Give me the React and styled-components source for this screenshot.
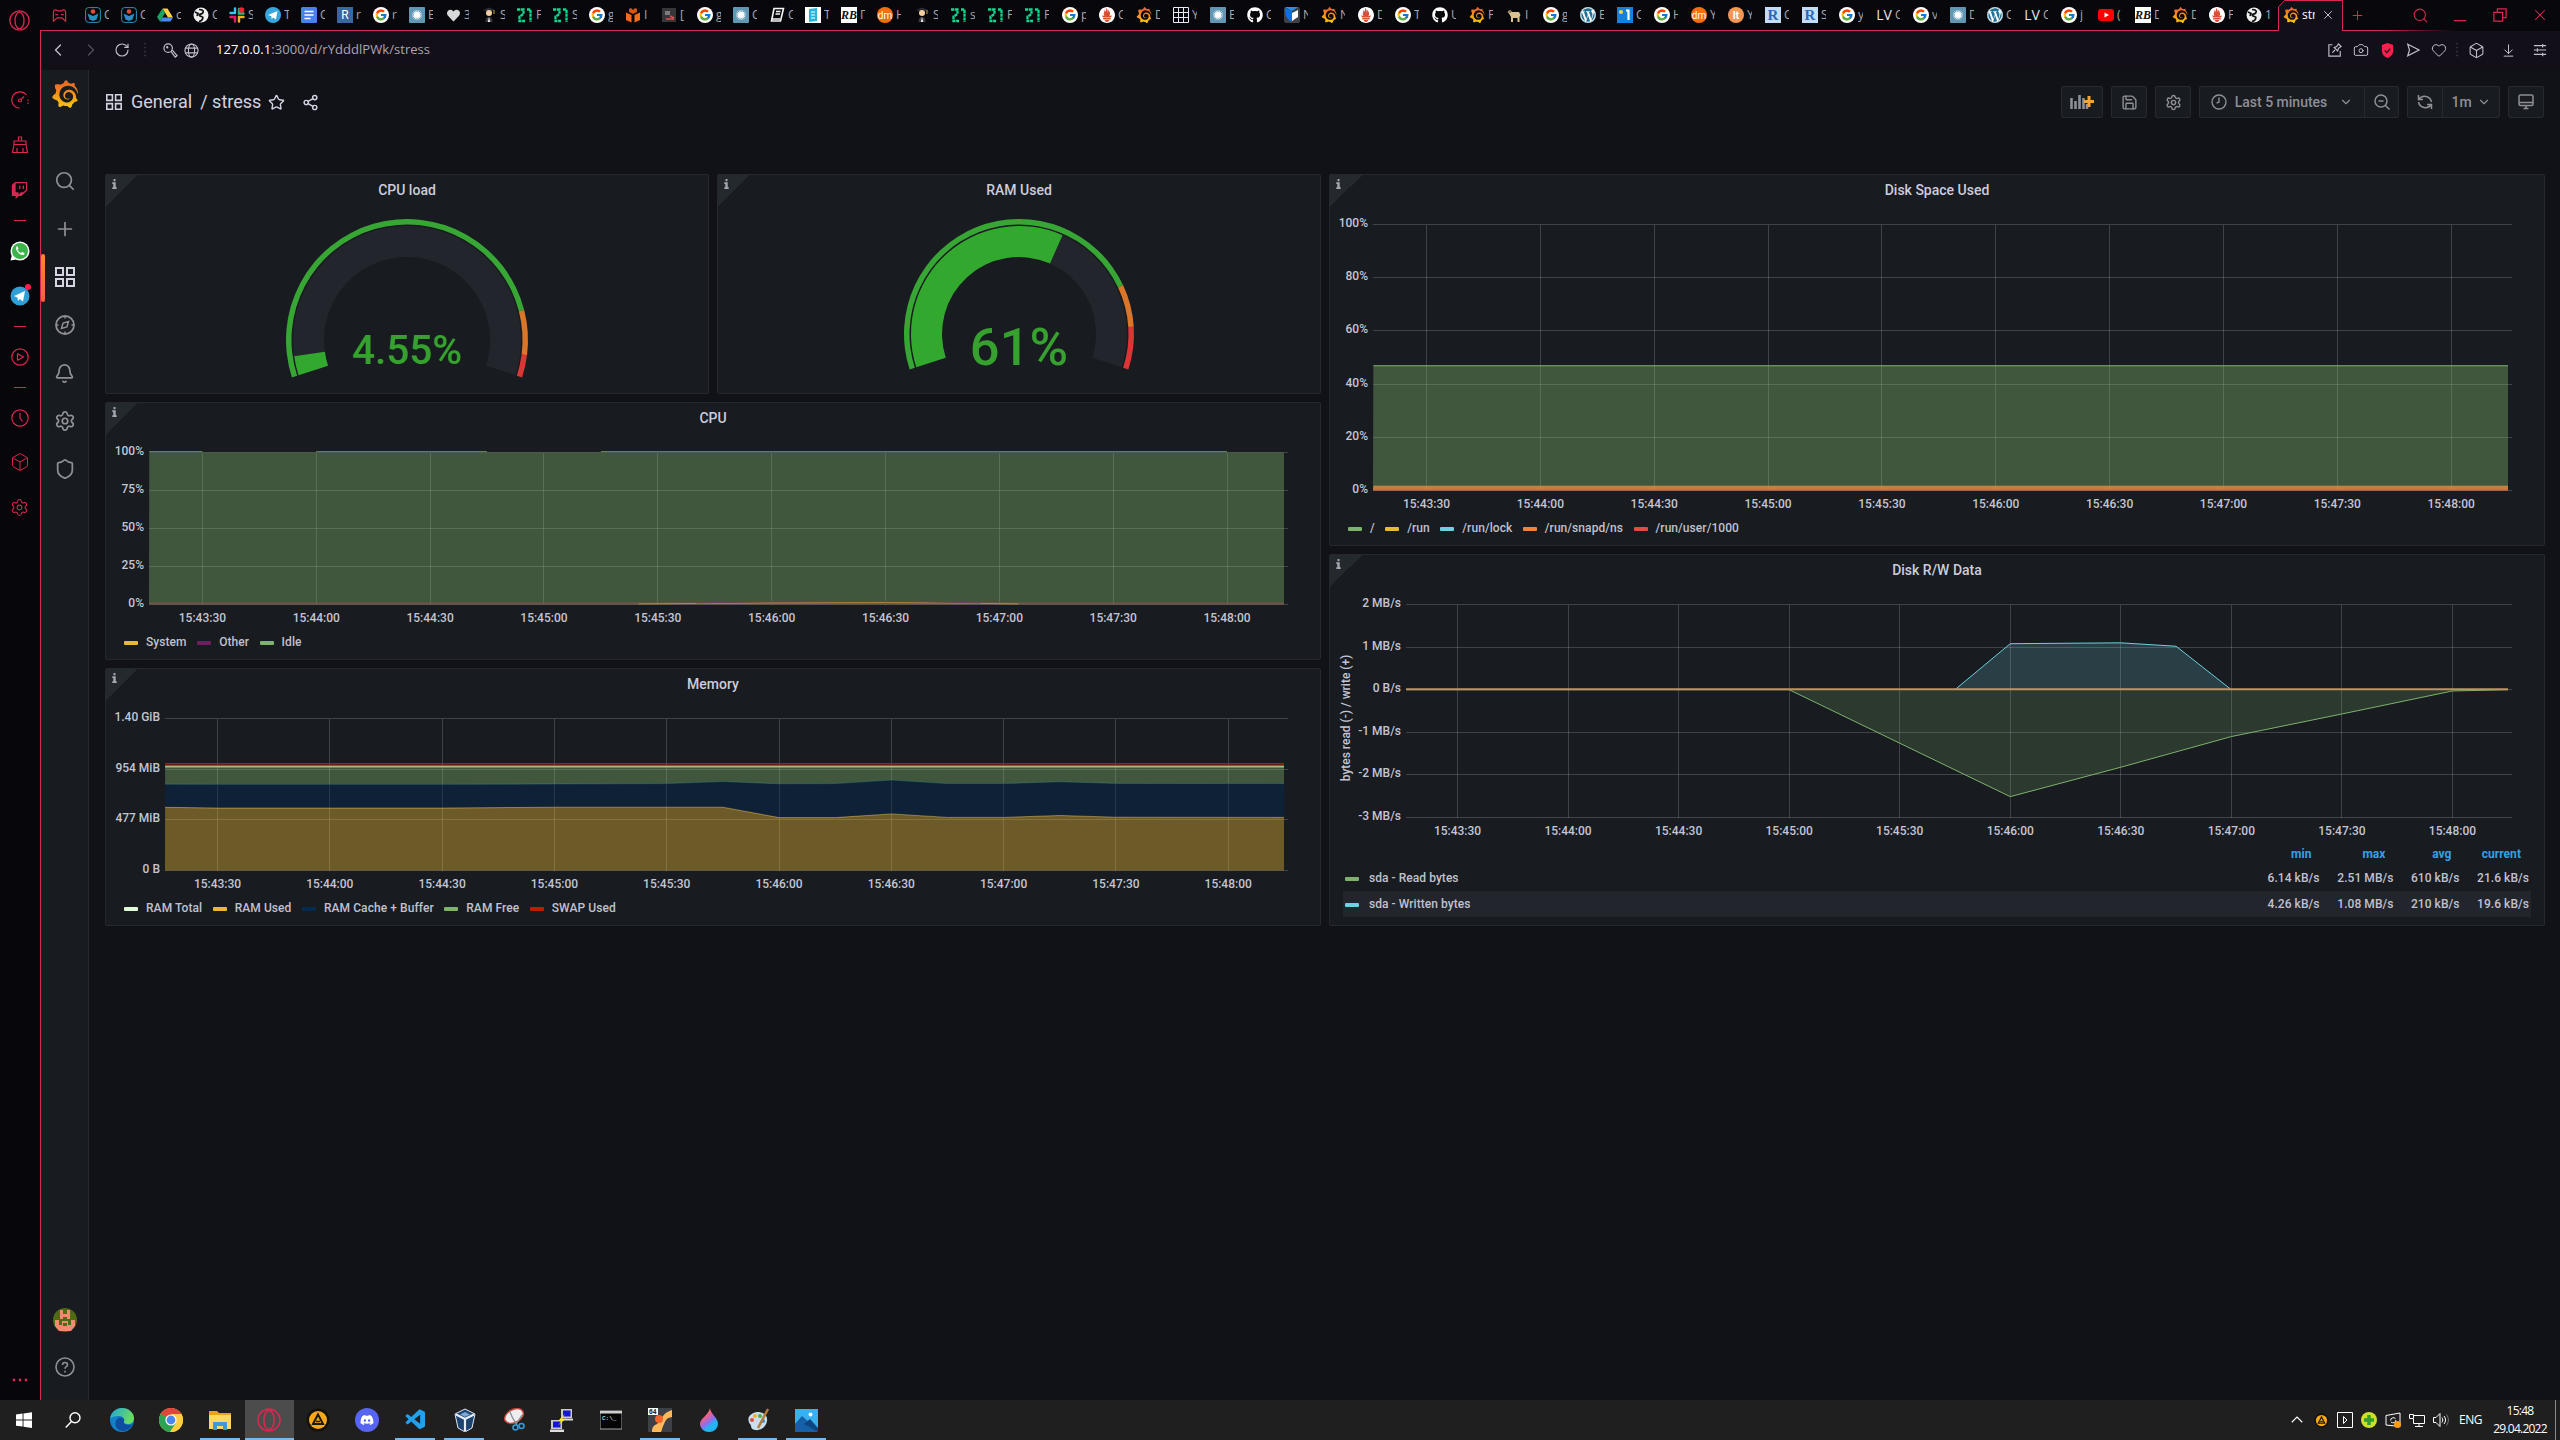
import React from "react";
import styled, { createGlobalStyle, css } from "styled-components";
import {
  ArrowDownToLine, Bell, Box, Camera, ChevronDown, ChevronLeft, ChevronRight,
  Heart, Plus, RotateCw, Save, Search, Settings, Share2, Shield, Star, X,
} from "lucide-react";
import { SiGrafana, SiPrometheus } from "react-icons/si";
import { FaGithub, FaWordpress, FaDiscord, FaHeart, FaTwitch } from "react-icons/fa";
import { FcGoogle } from "react-icons/fc";
import { VscVscode } from "react-icons/vsc";

const RED = "#d9284f";
const UI = `"Segoe UI", "Open Sans", "Noto Sans", sans-serif`;
const ROBOTO = `Roboto, "Liberation Sans", sans-serif`;

const Global = createGlobalStyle`
  * { box-sizing: border-box; }
  html, body { margin: 0; padding: 0; background: #111217; }
  body { font-family: ${ROBOTO}; color: #ccccdc; overflow: hidden; }
  svg { display: block; flex: none; }
`;

const Screen = styled.div`
  width: 2560px;
  height: 1440px;
  display: flex;
  flex-direction: column;
  overflow: hidden;
`;

const Browser = styled.div`
  display: flex;
  height: 1400px;
  background: #08070c;
`;

/* ---------- left browser rail ---------- */

const Rail = styled.aside`
  width: 40px;
  display: flex;
  flex-direction: column;
  align-items: center;
  color: ${RED};
  background: #07060b;
`;

const RailItem = styled.div`
  position: relative;
  width: 39px;
  margin-right: 1px;
  height: ${(p) => p.$h}px;
  display: flex;
  align-items: center;
  justify-content: center;
`;

const RailDash = styled.div`
  width: 12px;
  height: 1px;
  background: ${RED};
`;

const RailGap = styled.div`
  flex: 1;
`;

const Badge = styled.i`
  position: absolute;
  top: 11px;
  left: 25px;
  width: 6px;
  height: 6px;
  border-radius: 50%;
  background: #ff1f4f;
`;

const Window = styled.div`
  flex: 1;
  min-width: 0;
  display: flex;
  flex-direction: column;
`;

const TabStrip = styled.div`
  height: 30px;
  display: flex;
  align-items: center;
  padding-left: 1px;
  background: #08080c;
  font: 12px/30px ${UI};
  color: #e6e3ea;
`;

const PinnedSlot = styled.div`
  width: 36px;
  height: 30px;
  display: flex;
  align-items: center;
  justify-content: center;
  color: ${RED};
`;

const Tab = styled.div`
  width: ${(p) => p.$w}px;
  height: 30px;
  padding-left: 8px;
  display: flex;
  align-items: center;
  gap: 3px;
  flex: none;
`;

const TabText = styled.span`
  width: ${(p) => p.$w || 5}px;
  overflow: hidden;
  white-space: nowrap;
  color: ${(p) => (p.$active ? "#fff" : "#a9a6ad")};
`;

const ActiveTab = styled.div`
  position: relative;
  width: 65px;
  height: 31px;
  margin: 1px 0 0 3px;
  padding: 0 6px 1px 5px;
  display: flex;
  align-items: center;
  gap: 3px;
  flex: none;
`;

const TabOutline = styled.svg`
  position: absolute;
  inset: 0;
`;

const Over = styled.div`
  position: relative;
  display: flex;
  align-items: center;
  margin-left: ${(p) => p.$ml || 0}px;
`;

const StripControls = styled.div`
  display: flex;
  margin-left: auto;
  color: ${RED};
`;

const StripButton = styled.div`
  width: ${(p) => p.$w || 40}px;
  height: 30px;
  display: flex;
  align-items: center;
  justify-content: center;
  color: ${RED};
`;

const Rule = styled.div`
  height: 1px;
  display: flex;
  background: linear-gradient(90deg, ${RED} 0, ${RED} 2340px, transparent 2415px);
`;

const RuleGap = styled.i`
  width: 62px;
  height: 1px;
  margin-left: 2239px;
  background: #120f19;
`;

const Body = styled.div`
  flex: 1;
  display: flex;
  flex-direction: column;
  border-left: 1px solid ${RED};
  min-height: 0;
`;

const AddressBar = styled.div`
  height: 39px;
  display: flex;
  align-items: center;
  padding-right: 5px;
  background: #120f19;
  color: #c3bfca;
`;

const BarSlot = styled.div`
  width: ${(p) => p.$w}px;
  height: 39px;
  padding-bottom: 1px;
  display: flex;
  align-items: center;
  justify-content: center;
  opacity: ${(p) => (p.$dim ? 0.35 : 1)};
`;

const Url = styled.div`
  margin-left: 15px;
  flex: 1;
  font: 13px/37px ${UI};
  height: 39px;
  letter-spacing: 0.05px;
  color: #aaa5b1;
  b { font-weight: 400; color: #fff; }
`;

/* ---------- grafana ---------- */

const Grafana = styled.div`
  flex: 1;
  display: flex;
  min-height: 0;
  background: #111217;
`;

const SideMenu = styled.nav`
  width: 48px;
  padding-bottom: 10px;
  border-right: 1px solid #26292e;
  background: #181b1f;
  display: flex;
  flex-direction: column;
  align-items: center;
  color: #8e8f98;
`;

const Brand = styled.div`
  height: 87px;
  padding-top: 10px;
`;

const SideItem = styled.div`
  position: relative;
  width: 47px;
  height: ${(p) => p.$h || 48}px;
  display: flex;
  align-items: center;
  justify-content: center;
  color: ${(p) => (p.$active ? "#d5d6e2" : "inherit")};
  ${(p) => p.$active && css`
    &::before {
      content: "";
      position: absolute;
      left: 0;
      top: 1px;
      width: 4px;
      height: 48px;
      border-radius: 2px;
      background: linear-gradient(#ff8833, #f55f3e);
    }
  `}
`;

const Main = styled.main`
  flex: 1;
  min-width: 0;
  padding: 16px 15px 0 16px;
`;

const NavBar = styled.header`
  height: 32px;
  display: flex;
  align-items: center;
  margin-bottom: 56px;
`;

const Crumb = styled.div`
  display: flex;
  align-items: center;
  font-size: 18px;
  line-height: 32px;
  color: #d2d2e0;
  white-space: pre;
`;

const CrumbText = styled.span`
  margin-left: ${(p) => p.$ml}px;
`;

const CrumbIcon = styled.span`
  margin-left: ${(p) => p.$ml}px;
`;

const Actions = styled.div`
  margin-left: auto;
  margin-right: 1px;
  display: flex;
  gap: 8px;
`;

const ToolGroup = styled.div`
  display: flex;
  height: 32px;
  border: 1px solid #26292e;
  border-radius: 2px;
  background: #181b1f;
  color: #8e8f98;
`;

const Tool = styled.div`
  width: ${(p) => p.$w}px;
  display: flex;
  align-items: center;
  justify-content: center;
  gap: ${(p) => p.$gap || 0}px;
  font-size: 14px;
  font-weight: 500;
  & + & { border-left: 1px solid #26292e; }
`;

const Board = styled.div`
  display: grid;
  grid-template-columns: 1216px 1216px;
  gap: 8px;
`;

const Column = styled.div`
  display: flex;
  flex-direction: column;
  gap: 8px;
`;

const Pair = styled.div`
  display: grid;
  grid-template-columns: 1fr 1fr;
  gap: 8px;
`;

const PanelBox = styled.section`
  position: relative;
  height: ${(p) => p.$h}px;
  border: 1px solid #25282d;
  border-radius: 2px;
  background: #181b1f;
  overflow: hidden;
`;

const PanelTitle = styled.h2`
  margin: 0;
  height: 31px;
  font-size: 14px;
  font-weight: 500;
  line-height: 31px;
  text-align: center;
  color: #ccccdc;
`;

const Corner = styled.div`
  position: absolute;
  left: 0;
  top: 0;
  width: 32px;
  height: 32px;
  padding: 4px 0 0 6px;
  background: linear-gradient(135deg, #24292e 50%, transparent 50%);
`;

const ChartText = styled.text`
  font-family: ${ROBOTO};
  font-size: 12px;
  font-weight: 500;
  fill: #c4c5d4;
  dominant-baseline: central;
`;

const GaugeValue = styled.text`
  font-family: ${ROBOTO};
  font-weight: 500;
  fill: #37a12f;
  text-anchor: middle;
`;

const Legend = styled.div`
  height: 24px;
  display: flex;
  align-items: center;
  padding-left: 18px;
  font-size: 12px;
  font-weight: 500;
  letter-spacing: 0.07px;
  color: #c0c1d0;
`;

const LegendItem = styled.span`
  display: flex;
  align-items: center;
  margin-right: 10.5px;
`;

const Swatch = styled.i`
  width: 14px;
  height: 4px;
  margin-right: ${(p) => p.$mr || 8}px;
  margin-top: 2px;
  border-radius: 1px;
  background: ${(p) => p.$c};
`;

const StatTable = styled.div`
  margin: 0 13px;
  font-size: 12px;
  font-weight: 500;
  letter-spacing: 0.05px;
  color: #c0c1d0;
`;

const StatRow = styled.div`
  display: grid;
  grid-template-columns: 1fr 74px 74px 66px 69.5px;
  height: ${(p) => (p.$head ? 22 : 26)}px;
  line-height: ${(p) => (p.$head ? 22 : 26)}px;
  padding-right: 2px;
  background: ${(p) => (p.$shade ? "#22252b" : "transparent")};
  ${(p) => p.$head && css`
    color: #33a2e5;
    font-weight: 700;
    & > span { padding-right: 8px; }
  `}
`;

const StatCell = styled.span`
  text-align: right;
`;

const StatName = styled.span`
  display: flex;
  align-items: center;
  padding-left: 2px;
`;

/* ---------- taskbar ---------- */

const Taskbar = styled.footer`
  height: 40px;
  display: flex;
  align-items: stretch;
  background: #1f1f1f;
  color: #fff;
  font-family: ${UI};
`;

const TaskSlot = styled.div`
  position: relative;
  width: ${(p) => p.$w || 48.9}px;
  height: 40px;
  display: flex;
  align-items: center;
  justify-content: center;
  background: ${(p) => (p.$active ? "#4c4c4c" : "transparent")};
  ${(p) => p.$open && css`
    &::after {
      content: "";
      position: absolute;
      bottom: 0;
      left: ${p.$active ? 0 : 4}px;
      right: ${p.$active ? 0 : 5}px;
      height: 2px;
      background: #76b9ed;
    }
  `}
`;

const Tray = styled.div`
  margin-left: auto;
  display: flex;
  align-items: center;
`;

const TraySlot = styled.div`
  width: 24px;
  display: flex;
  align-items: center;
  justify-content: center;
`;

const TrayText = styled.div`
  width: ${(p) => p.$w}px;
  font-size: 12px;
  line-height: 18.5px;
  letter-spacing: ${(p) => p.$ls || -0.75}px;
  text-align: center;
`;

const ShowDesktop = styled.i`
  width: 5px;
  height: 40px;
  margin-left: 3px;
  border-left: 1px solid #8a8a8a;
`;

/* ---------- favicons ---------- */

const Ico = ({ s = 16, vb = 16, children, ...rest }) => (
  <svg width={s} height={s} viewBox={`0 0 ${vb} ${vb}`} fill="none" {...rest}>{children}</svg>
);

const Letter = ({ children, x = 8, y = 12, size = 11, fill = "#fff", weight = 700, family = ROBOTO, italic }) => (
  <text x={x} y={y} fontSize={size} fill={fill} fontWeight={weight} fontFamily={family}
    fontStyle={italic ? "italic" : "normal"} textAnchor="middle">{children}</text>
);

const GrafanaMark = ({ s = 16 }) => <SiGrafana size={s} style={{ fill: "url(#grafanaFill)" }} />;

const fav = {
  bot: () => <Ico><rect x=".6" y=".6" width="14.8" height="14.8" rx="3" stroke="#2a93bd" /><circle cx="8" cy="4.5" r="2.3" fill="#e04b3b" /><path d="M2.500 6.500 8 9l5.500-2.500-2 6L8 14l-3.500-1.500z" fill="#2590c4" /></Ico>,
  drive: () => <Ico><path d="M5.500 1.500h5L16 10.500h-5z" fill="#ffcf48" /><path d="M5.500 1.500 8 6 3 14.500 0 10z" fill="#1da462" /><path d="M3 14.500 5.500 10.500H16L13.500 14.500z" fill="#4688f4" /></Ico>,
  globe: () => <Ico><circle cx="8" cy="8" r="7.500" fill="#eee" /><path d="M6 2.500c3 0 5 1 4 3S5.500 7 6.500 8.500 11 9 9.500 12 6 14 6 14M2 5l3 1.500L4 9" stroke="#111" strokeWidth="1.700" /></Ico>,
  slack: () => <Ico strokeLinecap="round" strokeWidth="2.400"><path d="M6 1.500V6M1.500 6H4" stroke="#36c5f0" /><path d="M10 2v4.500h4.500" stroke="#2eb67d" /><path d="M10 14.500V10h4.500" stroke="#ecb22e" /><path d="M1.500 10H6v4.500" stroke="#e01e5a" /><circle cx="12.500" cy="3" r="2.800" fill="#ff1f2f" stroke="none" /></Ico>,
  telegram: () => <Ico><circle cx="8" cy="8" r="8" fill="#36a6dd" /><path d="m3 8 9.500-4-1.600 8.500-2.700-2-1.500 1.500-.4-2.700z" fill="#fff" /></Ico>,
  docs: () => <Ico><rect width="16" height="16" rx="1.500" fill="#4a80ee" /><path d="M3.500 4.500h9M3.500 8h9M3.500 11.500h6" stroke="#fff" strokeWidth="1.500" /></Ico>,
  rblue: () => <Ico><rect width="16" height="16" fill="#3a679f" /><Letter size={12} weight={400}>R</Letter></Ico>,
  google: () => <Ico><circle cx="8" cy="8" r="8" fill="#fff" /><g transform="translate(1.500 1.500)"><FcGoogle size={13} /></g></Ico>,
  snow: () => <Ico><rect width="16" height="16" rx="1" fill="#6098b4" /><circle cx="8" cy="8" r="3" fill="#fff" /><path d="M8 3v10M3 8h10M4.500 4.500l7 7M11.500 4.500l-7 7M6 3.500l4 9M3.500 10l9-4M3.500 6l9 4M10 3.500l-4 9" stroke="#fff" strokeWidth=".8" /></Ico>,
  heart: () => <FaHeart size={13} color="#d8d8da" style={{ margin: "0 1.5px" }} />,
  grad: () => <Ico><path d="M2 3 8 .5 14 3 8 5.500z" fill="#2b2b31" /><circle cx="8" cy="6" r="3" fill="#f1cfa0" /><path d="M4.500 15c0-3 1-5 3.500-5s3.500 2 3.500 5z" fill="#3b3a42" /><path d="m8 10-1.200 5h2.400z" fill="#eee" /><path d="M13 3v4" stroke="#c9a443" /></Ico>,
  n21: () => <Ico stroke="#12d88e" strokeWidth="2.300"><path d="M0 2.500h6.500V7L2.500 9.500V14H8M10 2.500h3.500V15" strokeDasharray="3.200 .6" /></Ico>,
  box: () => <Ico><path d="M1 5.500 6.500 8v7.500L1 13zM15 5.500 9.500 8v7.500L15 13z" fill="#ef6c1a" /><path d="M4 5V2l2-1 2 2 2-2 2 1v3L8 7z" fill="#d65410" /></Ico>,
  card: () => <Ico><rect x="1" y="1" width="14" height="14" fill="#37373a" /><rect x="4" y="4" width="5" height="4" fill="#7b7b80" /><path d="M5 12h8M9 9l4 2" stroke="#d85050" strokeWidth="1.500" /></Ico>,
  book: () => <Ico><path d="M5 1.500h9.500L11.500 14H2.500z" stroke="#f5f5f5" strokeWidth="1.600" /><path d="M7 4.500h4.500M6.500 7h4.500M2.500 12h8.500" stroke="#f5f5f5" strokeWidth="1.300" /></Ico>,
  e: () => <Ico><rect width="16" height="16" fill="#fff" /><path d="M4 2 12 1v13l-8 1z" fill="#27b6da" /><path d="M6 5h4M6 8h4M6 11h4" stroke="#fff" strokeWidth="1.200" /></Ico>,
  rb: () => <Ico><rect width="16" height="16" fill="#fff" /><Letter family={`"Liberation Serif", serif`} size={12} fill="#111" italic>RB</Letter></Ico>,
  dm: () => <Ico><circle cx="8" cy="8" r="8" fill="#f96d0c" /><Letter size={10} y={11.500} weight={400}>dm</Letter></Ico>,
  prom: () => <Ico><circle cx="8" cy="8" r="7" fill="#da4e31" /><SiPrometheus size={16} color="#fff" /></Ico>,
  graf: () => <GrafanaMark />,
  grid: () => <Ico><path d="M.5.5h15v15H.5zM.5 5.500h15M.5 10.500h15M5.500.5v15M10.500.5v15" stroke="#e9e6f5" /></Ico>,
  github: () => <FaGithub size={16} color="#fff" />,
  cube: () => <Ico><rect width="16" height="16" rx="2" fill="#3d4045" /><path d="M1 1 8 4v11C3 13 1 9 1 1z" fill="#0f6fe0" /><path d="M1 0h13L8 4z" fill="#2b8bff" /><path d="M8 6l6-3v7l-6 4z" fill="#fff" /></Ico>,
  sheep: () => <Ico><path d="M3 6.500 1.500 5 4 3l2 2h7l1.500 3-1 2v5h-2v-4H7v4H5v-5z" fill="#d9c393" /><circle cx="4" cy="4.500" r="1.500" fill="#8f7448" /></Ico>,
  wp: () => <Ico><circle cx="8" cy="8" r="8" fill="#fff" /><FaWordpress size={16} color="#1e7296" /></Ico>,
  one: () => <Ico><rect width="16" height="16" fill="#1482dc" /><circle cx="4" cy="5" r="2" fill="#f4d44b" /><path d="M9 3.500h2.500V13" stroke="#fff" strokeWidth="2.200" /></Ico>,
  lt: () => <Ico><circle cx="8" cy="8" r="8" fill="#f59752" /><Letter y={12}>lt</Letter></Ico>,
  rs: () => <Ico><rect width="16" height="16" fill="#c3ddf7" /><Letter family={`"Liberation Serif", serif`} size={15} y={13} fill="#2d68b8">R</Letter></Ico>,
  lv: () => <Ico overflow="visible"><Letter size={14} y={13} weight={400} fill="#e6e3ea" family={UI}>LV</Letter></Ico>,
  yt: () => <Ico><rect y="2" width="16" height="12" rx="3" fill="#f00" /><path d="M6.500 5.500 11 8l-4.500 2.500z" fill="#fff" /></Ico>,
};

const tabs = [
  ["bot", "C"], ["bot", "C"], ["drive", "c"], ["globe", "C"], ["slack", "S"], ["telegram", "T"], ["docs", "C"],
  ["rblue", "r"], ["google", "r"], ["snow", "E"], ["heart", "3"], ["grad", "S"], ["n21", "F"], ["n21", "S"],
  ["google", "g"], ["box", "I"], ["card", "["], ["google", "g"], ["snow", "C"], ["book", "C"], ["e", "T"], ["rb", "Г"],
  ["dm", "H"], ["grad", "S"], ["n21", "s"], ["n21", "F"], ["n21", "F"], ["google", "p"], ["prom", "C"], ["graf", "D"],
  ["grid", "Y"], ["snow", "E"], ["github", "C"], ["cube", "N"], ["graf", "N"], ["prom", "D"], ["google", "T"],
  ["github", "U"], ["graf", "F"], ["sheep", "I"], ["google", "g"], ["wp", "E"], ["one", "C"], ["google", "H"], ["dm", "Y"],
  ["lt", "Y"], ["rs", "C"], ["rs", "S"], ["google", "y"], ["lv", "C"], ["google", "v"], ["snow", "D"], ["wp", "C"],
  ["lv", "C"], ["google", "j"], ["yt", "("], ["rb", "D"], ["graf", "D"], ["prom", "F"], ["globe", "1"],
];

const OperaMark = ({ s = 20, color = RED }) => (
  <Ico s={s} vb={20} stroke={color} strokeWidth="1.300"><circle cx="10" cy="10" r="9.200" /><ellipse cx="10" cy="10" rx="4.300" ry="8" /></Ico>
);

/* ---------- charts ---------- */

const times = ["15:43:30", "15:44:00", "15:44:30", "15:45:00", "15:45:30", "15:46:00", "15:46:30", "15:47:00", "15:47:30", "15:48:00"];
const snap = (v) => Math.floor(v) + 0.5;

function Plot({ height, plot, yTicks, yLabel, series }) {
  const { left, x0, step, bottom, top = 18.5, min = 0, max } = plot;
  const right = 1178;
  const X = (t) => Math.min(right, Math.max(left, x0 + (t / 30) * step));
  const Y = (v) => bottom - ((v - min) / (max - min)) * (bottom - top);
  const path = (pts) => pts.map(([t, v]) => `${X(t).toFixed(2)} ${Y(v).toFixed(2)}`).join("L");
  return (
    <svg width="1214" height={height}>
      <g stroke="#ccccdc" strokeOpacity=".22" shapeRendering="crispEdges">
        {yTicks.map(([v, label]) => <line key={label} x1={left} x2={right + 4} y1={snap(Y(v))} y2={snap(Y(v))} />)}
        {times.map((t, i) => <line key={t} y1={top} y2={bottom} x1={snap(x0 + i * step)} x2={snap(x0 + i * step)} />)}
      </g>
      {series.map((s, i) => {
        const base = s.base || [[600, 0], [-600, 0]];
        return (
          <g key={i}>
            {s.fill && <path d={`M${path(s.points)}L${path(base)}Z`} fill={s.fill} fillOpacity={s.alpha} />}
            {s.line && <path d={`M${path(s.points)}`} fill="none" stroke={s.line} strokeWidth={s.width || 1} strokeOpacity={s.lineAlpha || 1} />}
          </g>
        );
      })}
      {yTicks.map(([v, label]) => <ChartText key={label} x={left - 5} y={Y(v) - 1.5} textAnchor="end">{label}</ChartText>)}
      {times.map((t, i) => <ChartText key={t} x={x0 + i * step} y={bottom + 13.3} textAnchor="middle">{t}</ChartText>)}
      {yLabel && <ChartText transform="translate(15.5 132) rotate(-90)" textAnchor="middle">{yLabel}</ChartText>}
    </svg>
  );
}

const polar = (cx, cy, r, f) => {
  const a = ((162 + 216 * f) * Math.PI) / 180;
  return `${(cx + r * Math.cos(a)).toFixed(2)} ${(cy + r * Math.sin(a)).toFixed(2)}`;
};

const Arc = ({ cx, cy, ro, ri, from, to, fill }) => {
  const big = (to - from) * 216 > 180 ? 1 : 0;
  return (
    <path fill={fill} d={`M${polar(cx, cy, ro, from)}A${ro} ${ro} 0 ${big} 1 ${polar(cx, cy, ro, to)}L${polar(cx, cy, ri, to)}A${ri} ${ri} 0 ${big} 0 ${polar(cx, cy, ri, from)}Z`} />
  );
};

function Gauge({ r, value, label, warn, crit, size, baseline }) {
  const c = { cx: 301, cy: 13 + r };
  const ring = { ...c, ro: r, ri: r - 5.5 };
  const band = { ...c, ro: r - 7, ri: r - 38 };
  return (
    <svg width="602" height="187">
      <Arc {...band} from={0} to={1} fill="#22252b" />
      <Arc {...band} from={0} to={value} fill="#32a82e" />
      <Arc {...ring} from={0} to={warn} fill="#37a634" />
      <Arc {...ring} from={warn} to={crit} fill="#d9762a" />
      <Arc {...ring} from={crit} to={1} fill="#dc3535" />
      <GaugeValue x="301" y={baseline} fontSize={size}>{label}</GaugeValue>
    </svg>
  );
}

const Panel = ({ title, h, children }) => (
  <PanelBox $h={h}>
    <Corner>
      <svg width="5" height="10" viewBox="0 0 5 10"><path d="M1.500 0h2v2.200h-2zM.3 3.200h3.400v5h1V10H.3V8.200h1v-3.200h-1z" fill="#a6a7b2" /></svg>
    </Corner>
    <PanelTitle>{title}</PanelTitle>
    {children}
  </PanelBox>
);

const Legends = ({ items }) => (
  <Legend>
    {items.map(([c, t]) => <LegendItem key={t}><Swatch $c={c} />{t}</LegendItem>)}
  </Legend>
);

const GREEN = "#7eb26d";
const YELLOW = "#eab839";

const cpuSeries = [
  { points: [[-14, 100], [286, 100]], fill: GREEN, alpha: 0.4 },
  { points: [[-14, 0.6], [286, 0.6]], line: "#6f5549", width: 2 },
  { points: [[115, 0.4], [150, 1], [180, 1.3], [195, 1], [215, 0.4]], line: "#b08a45" },
  { points: [[130, 1], [150, 1.9], [190, 1.9], [205, 1]], line: "#6d3f52" },
  ...[[-14, 0], [30, 75], [105, 270]].map(([a, b]) => ({ points: [[a, 100.6], [b, 100.6]], line: GREEN, lineAlpha: 0.75 })),
];

const used = [[-14, 595], [0, 588], [60, 588], [90, 596], [135, 596], [150, 498], [165, 498], [180, 533], [195, 500], [210, 500], [225, 518], [240, 502], [286, 500]];
const cache = [[-14, 813], [0, 811], [60, 811], [120, 818], [135, 837], [150, 816], [165, 818], [180, 851], [195, 818], [210, 818], [225, 835], [240, 820], [286, 818]];
const free = [[-14, 980], [286, 980]];
const swap = [[-14, 1007], [286, 1007]];
const rev = (a) => [...a].reverse();

const memSeries = [
  { points: used, fill: YELLOW, alpha: 0.4, line: "#bd9c44" },
  { points: cache, base: rev(used), fill: "#052b51", alpha: 0.45, line: "#1c4450" },
  { points: free, base: rev(cache), fill: GREEN, alpha: 0.4, line: "#a9b788", width: 2 },
  { points: swap, base: [[286, 990], [-14, 990]], fill: "#bf1b00", alpha: 0.5, line: "#a92008" },
];

const spaceSeries = [
  { points: [[-14, 46.9], [286, 46.9]], fill: GREEN, alpha: 0.4, line: GREEN },
  { points: [[-14, 1.6], [286, 1.6]], fill: "#ef843c", alpha: 0.8, line: "#c98f3e" },
  { points: [[-14, 0.1], [286, 0.1]], line: "#b0604c" },
];

const rwSeries = [
  { points: [[-14, 0], [90, 0], [150, -2.51], [180, -1.82], [210, -1.1], [240, -0.57], [270, -0.03], [286, 0]], fill: GREEN, alpha: 0.2, line: GREEN },
  { points: [[135, 0], [150, 1.08], [180, 1.1], [195, 1.02], [210, 0]], fill: "#6ed0e0", alpha: 0.2, line: "#6ed0e0" },
  { points: [[-14, 0.01], [286, 0.01]], line: "#bd9660", width: 2 },
];

/* ---------- interface icons ---------- */

const Apps = ({ s }) => <Ico s={s} vb={20} stroke="currentColor" strokeWidth="2"><path d="M1 1h7v7H1zM12 1h7v7h-7zM1 12h7v7H1zM12 12h7v7h-7z" /></Ico>;
const CompassIcon = () => <Ico s={20} vb={20} stroke="currentColor" strokeWidth="1.800"><circle cx="10" cy="10" r="9" /><path d="M10 1v2.500M10 16.500V19M1 10h2.500M16.500 10H19M13.500 6.500l-1.600 5.400-5.400 1.600 1.600-5.400z" strokeWidth="1.500" /></Ico>;
const HelpIcon = () => <Ico s={20} vb={20} stroke="currentColor" strokeWidth="1.600"><circle cx="10" cy="10" r="9" /><path d="M7.500 8c0-3.300 5-3.300 5 0 0 1.800-2.500 1.600-2.500 3.800M10 13.800v1.600" /></Ico>;
const GearThin = () => <Settings size={19} strokeWidth={1.3} />;
const Dots = () => <Ico s={14} stroke="#57535e" strokeWidth="1.200"><path d="M8 0v16" strokeDasharray="1.500 3" /></Ico>;
const ClockNine = () => <Ico s={16} stroke="currentColor" strokeWidth="1.400"><circle cx="8" cy="8" r="7" /><path d="M8 3.500V8l-2.500 1.200" /></Ico>;
const Aimp = ({ s }) => <Ico s={s} vb={24}><circle cx="12" cy="12" r="11.500" fill="#15120c" /><circle cx="12" cy="12" r="9" fill="#f5a81c" /><path d="M12 6.500 17 16H7z" stroke="#20180a" strokeWidth="2" /><path d="M10 13.500h4" stroke="#20180a" strokeWidth="1.500" /></Ico>;

const task = {
  start: <Ico s={16}><path d="M0 2.400 6.600 1.500v6.100H0zM7.500 1.400 16 .2v7.400H7.500zM0 8.500h6.600v6.100L0 13.700zM7.500 8.500H16v7.400l-8.500-1.200z" fill="#fff" /></Ico>,
  search: <Ico s={16} stroke="#fff" strokeWidth="1.400"><circle cx="10" cy="5.800" r="5" /><path d="M6.500 9.500.7 15.500" /></Ico>,
  edge: <Ico s={24} vb={24}><defs><linearGradient id="edgeA" x1="0" y1="0" x2="1" y2=".4"><stop stopColor="#1fa5dc" /><stop offset="1" stopColor="#6bdc5e" /></linearGradient></defs><circle cx="12" cy="12" r="12" fill="#1380c8" /><path d="M0 11C1 4 6 0 12 0c7 0 12 5 12 10 0 4-3 6-6 6s-5-1-4-2.500c1-2-.5-5.500-5-5.500-4 0-8 1-9 3z" fill="url(#edgeA)" /><path d="M14 13.500c-1 1.500 1 3.500 4.500 3.500 1.500 0 3-.4 4.200-1.200C20 22 14 24.500 9 22c-5-3-4.500-10-.5-12 3-1.300 6.500.8 5.500 3.500z" fill="#0d4f9e" /></Ico>,
  chrome: <Ico s={24} vb={24}><circle cx="12" cy="12" r="12" fill="#ffcd40" /><path d="M12 12 1.600 6A12 12 0 0 1 22.400 6z" fill="#e0463a" /><path d="M1.600 6A12 12 0 0 0 11 23.950L17 14.500 12 12z" fill="#2ca350" /><path d="M1.600 6 7 14.800 12 12z" fill="#2ca350" /><path d="M12 6h10.400A12 12 0 0 1 11 23.950L17.200 15z" fill="#ffcd40" /><circle cx="12" cy="12" r="5.600" fill="#fff" /><circle cx="12" cy="12" r="4.400" fill="#4a86ee" /></Ico>,
  folder: <Ico s={22} vb={22}><path d="M0 2h8l2 2h12v16H0z" fill="#e3a51c" /><path d="M0 6h22v14H0z" fill="#ffd766" /><path d="M4 13h14v8h-4v-4H8v4H4z" fill="#3f97dc" /></Ico>,
  opera: <OperaMark s={24} />,
  aimp: <Aimp s={24} />,
  discord: <Ico s={24} vb={24}><circle cx="12" cy="12" r="12" fill="#5865f2" /><g transform="translate(5 5)"><FaDiscord size={14} color="#fff" /></g></Ico>,
  code: <VscVscode size={24} color="#23a0ea" />,
  vbox: <Ico s={24} vb={24}><path d="M12 1 22 6l-3 14-7 4-7-4L2 6z" fill="#1d4371" stroke="#dfe8f2" /><path d="M3 6.500 12 11l9-4.500M12 11v12" stroke="#e8eef5" strokeWidth="2.200" /><path d="M7 6.500 12 4l5 2.500L12 9z" fill="#7ba7d6" /></Ico>,
  snip: <Ico s={24} vb={24}><ellipse cx="12" cy="8" rx="10" ry="6.500" transform="rotate(-28 12 8)" fill="#eee" stroke="#c1443b" strokeWidth="1.500" /><path d="M8 4c2 6 5 10 7 13M20 7l-6 9" stroke="#8d9299" strokeWidth="1.300" /><circle cx="13.500" cy="19.500" r="2.500" stroke="#2c9ddb" strokeWidth="1.600" /><circle cx="19.500" cy="18" r="2.500" stroke="#2c9ddb" strokeWidth="1.600" /></Ico>,
  putty: <Ico s={24} vb={24}><path d="M11 1h11v9H11zM1 12h11v9H1z" fill="#c9c9c9" /><path d="M13 2.500h7.500v6H13zM3 13.500h7.500v6H3z" fill="#1414d8" /><path d="M10 10.500h13v2H12zM0 21.500h14V24H0z" fill="#dedede" /><path d="m15 6-7 7 4-.5-4 5 8-7-4 .5z" fill="#fff200" /></Ico>,
  cmd: <Ico s={22} vb={22}><path d="M0 2h22v18H0z" fill="#050505" stroke="#a8a8a8" /><path d="M0 2h22v2.500H0z" fill="#cfcfcf" /><text x="2" y="11" fontSize="6" fill="#fff" fontFamily="Liberation Mono, monospace">C:\_</text></Ico>,
  vm: <Ico s={24} vb={24}><rect width="24" height="24" fill="#3d4047" /><path d="M4 24c0-8 4-6 7-10s4-9 13-12v7c-6 1-6 3-8 7s-2 6-3 8z" fill="#fdb95a" /><circle cx="11" cy="11" r="4" fill="#f1642a" /><rect width="10" height="7" fill="#fff" /><text x="1" y="6" fontSize="6.500" fontWeight="700" fill="#222">64</text></Ico>,
  drop: <Ico s={24} vb={24}><defs><linearGradient id="dropA" x1="0" y1="0" x2=".6" y2="1"><stop offset=".1" stopColor="#ffb13d" /><stop offset=".4" stopColor="#ee5f8c" /><stop offset=".65" stopColor="#8a6ff0" /><stop offset=".8" stopColor="#23b5f2" /></linearGradient></defs><path d="M13 0c0 5 8 10 8 16a9 8 0 0 1-18 0C3 10 12 7 13 0z" fill="url(#dropA)" /></Ico>,
  paint: <Ico s={24} vb={24}><path d="M11 4c7 0 11 4 10 9-1 6-6 10-12 9-5-1-3-4-5-6S0 6 11 4z" fill="#c8e0ee" /><circle cx="6" cy="12" r="2" fill="#e34b3e" /><circle cx="9" cy="8" r="2" fill="#f5b22c" /><circle cx="14" cy="8" r="2" fill="#4cae53" /><circle cx="17" cy="13" r="2" fill="#3d87d8" /><path d="M22 1 12 20" stroke="#b77a35" strokeWidth="2.500" /></Ico>,
  photos: <Ico s={23} vb={23}><rect width="23" height="23" fill="#39b0f0" /><path d="m0 15 7-8 16 14v2H0z" fill="#1560a8" /><path d="m9 15 6-5 8 9v4z" fill="#0d4580" /><circle cx="15.500" cy="5.500" r="2" fill="#fff" /></Ico>,
};

const taskItems = [
  ["edge"], ["chrome"], ["folder", 1], ["opera", 1, 1], ["aimp"], ["discord"], ["code", 1], ["vbox", 1],
  ["snip"], ["putty"], ["cmd"], ["vm", 1], ["drop"], ["paint", 1], ["photos", 1],
];

export default function App() {
  return (
    <Screen>
      <Global />
      <svg width="0" height="0" style={{ position: "absolute" }}>
        <defs><linearGradient id="grafanaFill" x1="0" y1="0" x2="0" y2="1"><stop stopColor="#f05a28" /><stop offset="1" stopColor="#fbca0a" /></linearGradient></defs>
      </svg>
      <Browser>
        <Rail>
          <RailItem $h={40}><OperaMark s={21} /></RailItem>
          <RailItem $h={38} />
          <RailItem $h={44}><Ico s={18} vb={18} stroke={RED} strokeWidth="1.200"><path d="M8.500 17.200A8.200 8.200 0 1 1 15.500 4" /><path d="M17 8.500v6" strokeDasharray="1.500 1.500" /><circle cx="9" cy="9.500" r="1.500" /><path d="m10 8.500 3-3" /></Ico></RailItem>
          <RailItem $h={46}><Ico s={18} vb={18} stroke={RED} strokeWidth="1.200"><path d="M7.500 5V1h3v4M3 9V5h12v4M3 8.500h12l1.500 8h-15zM6 12v4M12 12v4" /></Ico></RailItem>
          <RailItem $h={44}><FaTwitch size={17} /></RailItem>
          <RailItem $h={17}><RailDash /></RailItem>
          <RailItem $h={44}><Ico s={20} vb={20}><circle cx="10" cy="10" r="9.500" fill="#fff" /><path d="m.5 19.500 1.500-6 4 5z" fill="#fff" /><circle cx="10" cy="10" r="8" fill="#3bb54a" /><path d="M6.500 5.500c-2 3 3 9.500 7.500 8.500l.5-2-2.500-1-1 1c-1.500-.5-3-2-3.500-3.500l1-1-1-2.200z" fill="#fff" /></Ico></RailItem>
          <RailItem $h={46}><Ico s={20} vb={20}><circle cx="10" cy="10" r="9.500" fill="#2f9fd6" /><path d="m4 10 11-5-2 10.500-3.200-2.500L8 15l-.4-3.300z" fill="#fff" /></Ico><Badge /></RailItem>
          <RailItem $h={15}><RailDash /></RailItem>
          <RailItem $h={45}><Ico s={18} vb={18} stroke={RED} strokeWidth="1.200"><circle cx="9" cy="9" r="8.200" /><path d="M6.500 5.800 12.500 9l-6 3.200z" strokeLinejoin="round" /></Ico></RailItem>
          <RailItem $h={17}><RailDash /></RailItem>
          <RailItem $h={43}><Ico s={18} vb={18} stroke={RED} strokeWidth="1.200"><circle cx="9" cy="9" r="8.200" /><path d="M9 4v5l2.500 3.500" /></Ico></RailItem>
          <RailItem $h={46}><Box size={20} strokeWidth={1.2} /></RailItem>
          <RailItem $h={44}><GearThin /></RailItem>
          <RailGap />
          <RailItem $h={40}><Ico s={16}><path d="M2 8h.01M8 8h.01M14 8h.01" stroke={RED} strokeWidth="2.800" strokeLinecap="round" /></Ico></RailItem>
        </Rail>
        <Window>
          <TabStrip>
            <PinnedSlot><Ico s={15} stroke={RED} strokeWidth="1.300"><path d="M1.500 14V4.500c0-3 3-3 4.500-1.500h4c1.500-1.500 4.500-1.500 4.500 1.500V14l-4-3.500h-5zM3.500 7h3M9.500 7h3" /></Ico></PinnedSlot>
            {tabs.map(([name, text], i) => {
              const Fav = fav[name];
              return <Tab key={i} $w={i < 22 ? 36 : 37}><Fav /><TabText>{text}</TabText></Tab>;
            })}
            <ActiveTab>
              <TabOutline width="65" height="31"><path d="M.5 31V7L6.500.5H64.500V31" fill="#120f19" stroke={RED} /></TabOutline>
              <Over><GrafanaMark /></Over>
              <Over><TabText $w={13} $active>stress</TabText></Over>
              <Over $ml={3}><X size={14} strokeWidth={1.4} /></Over>
            </ActiveTab>
            <StripButton $w={28}><Plus size={15} strokeWidth={1.6} /></StripButton>
            <StripControls>
              <StripButton><Search size={17} strokeWidth={1.5} /></StripButton>
              <StripButton><Ico s={14}><path d="M1 14.500h14" stroke={RED} strokeWidth="1.500" /></Ico></StripButton>
              <StripButton><Ico s={14} stroke={RED} strokeWidth="1.400"><path d="M1 5h10v10H1zM5 5V1h10v10h-4" /></Ico></StripButton>
              <StripButton><X size={18} strokeWidth={1.4} /></StripButton>
            </StripControls>
          </TabStrip>
          <Rule><RuleGap /></Rule>
          <Body>
            <AddressBar>
              <BarSlot $w={33}><ChevronLeft size={20} strokeWidth={1.6} /></BarSlot>
              <BarSlot $w={33} $dim><ChevronRight size={20} strokeWidth={1.6} /></BarSlot>
              <BarSlot $w={30}><RotateCw size={16} strokeWidth={1.7} /></BarSlot>
              <BarSlot $w={16}><Dots /></BarSlot>
              <BarSlot $w={6} />
              <BarSlot $w={22}><Ico s={15} stroke="currentColor" strokeWidth="1.300"><circle cx="5.500" cy="5.500" r="4.500" /><path d="m8.500 9 4.500 6 2-1.500L10 7.500" /><circle cx="4.500" cy="4.500" r=".6" /></Ico></BarSlot>
              <BarSlot $w={20}><Ico s={15} stroke="currentColor" strokeWidth="1.200"><circle cx="8" cy="8" r="7" /><ellipse cx="8" cy="8" rx="3.300" ry="7" /><path d="M1.500 5.500h13M1.500 10.500h13" /></Ico></BarSlot>
              <Url><b>127.0.0.1</b>:3000/d/rYdddlPWk/stress</Url>
              <BarSlot $w={26}><Ico s={14} stroke="currentColor" strokeWidth="1.300"><path d="M5 2H1v13h13V9M5 11l3-3M7 5l4 4 1-3 3-2-3-3-2 3z" /></Ico></BarSlot>
              <BarSlot $w={26}><Camera size={16} strokeWidth={1.5} /></BarSlot>
              <BarSlot $w={26}><Ico s={15}><path d="M8 0l6 2v6.500C14 12 11 15 8 16c-3-1-6-4-6-7.500V2z" fill="#ff1f4f" /><path d="m5 8 2.300 2.300L11 6" stroke="#120f19" strokeWidth="1.400" /></Ico></BarSlot>
              <BarSlot $w={26}><Ico s={14} stroke="currentColor" strokeWidth="1.400"><path d="M2 1.500 15 8 2 14.500 4 8z" /></Ico></BarSlot>
              <BarSlot $w={26}><Heart size={16} strokeWidth={1.5} /></BarSlot>
              <BarSlot $w={9}><Dots /></BarSlot>
              <BarSlot $w={31}><Box size={17} strokeWidth={1.5} /></BarSlot>
              <BarSlot $w={33}><ArrowDownToLine size={15} strokeWidth={1.6} /></BarSlot>
              <BarSlot $w={30}><Ico s={14} stroke="currentColor" strokeWidth="1.300"><path d="M1 3h14M1 8h14M1 13h14M11 1v4M5 6v4M11 11v4" /></Ico></BarSlot>
            </AddressBar>
            <Grafana>
              <SideMenu>
                <Brand><GrafanaMark s={28} /></Brand>
                <SideItem><Search size={22} strokeWidth={1.9} /></SideItem>
                <SideItem><Plus size={22} strokeWidth={1.9} /></SideItem>
                <SideItem $active><Apps s={20} /></SideItem>
                <SideItem><CompassIcon /></SideItem>
                <SideItem><Bell size={21} strokeWidth={2} /></SideItem>
                <SideItem><Settings size={22} strokeWidth={1.9} /></SideItem>
                <SideItem><Shield size={22} strokeWidth={1.9} /></SideItem>
                <RailGap />
                <SideItem><Ico s={24} vb={24}><circle cx="12" cy="12" r="12" fill="#4d6b12" /><path d="M7 2h3v4h4V2h3v9h-3V9h-4v2H7zM2 12h4v5h3v-4h6v4h3v-5h4v6l-4 5H6l-4-5z" fill="#f08a72" /><path d="M10 15h4v3h-4z" fill="#4d6b12" /></Ico></SideItem>
                <SideItem $h={46}><HelpIcon /></SideItem>
              </SideMenu>
              <Main>
                <NavBar>
                  <Crumb>
                    <CrumbIcon $ml={1}><Apps s={16} /></CrumbIcon>
                    <CrumbText $ml={9}>General</CrumbText>
                    <CrumbText $ml={8}>/ stress</CrumbText>
                    <CrumbIcon $ml={7}><Star size={17} strokeWidth={2} /></CrumbIcon>
                    <CrumbIcon $ml={17}><Share2 size={17} strokeWidth={2} /></CrumbIcon>
                  </Crumb>
                  <Actions>
                    <ToolGroup><Tool $w={40}><Ico s={24} vb={24}><path d="M1.500 21V10M5.500 21V13M9.500 21V7M13.500 21V10M17 21V16" stroke="currentColor" strokeWidth="2.600" transform="translate(0 -2)" /><path d="M19 6v11M14 11.500h10" stroke="#f9a03a" strokeWidth="3" /></Ico></Tool></ToolGroup>
                    <ToolGroup><Tool $w={34}><Save size={17} /></Tool></ToolGroup>
                    <ToolGroup><Tool $w={34}><Settings size={17} /></Tool></ToolGroup>
                    <ToolGroup>
                      <Tool $w={164} $gap={8}><ClockNine />Last 5 minutes<ChevronDown size={14} style={{ marginLeft: 4 }} /></Tool>
                      <Tool $w={34}><Ico s={16} stroke="currentColor" strokeWidth="1.500"><circle cx="7" cy="7" r="6" /><path d="m11.500 11.500 4 4M4.500 7h5" /></Ico></Tool>
                    </ToolGroup>
                    <ToolGroup>
                      <Tool $w={34}><Ico s={16} stroke="currentColor" strokeWidth="1.500"><path d="M1.500 1v4.500H6M1.800 5.500A7 7 0 0 1 14.500 8M14.500 15v-4.500H10M14.200 10.500A7 7 0 0 1 1.500 8" /></Ico></Tool>
                      <Tool $w={57} $gap={5}>1m<ChevronDown size={14} /></Tool>
                    </ToolGroup>
                    <ToolGroup><Tool $w={34}><Ico s={16} stroke="currentColor" strokeWidth="1.500"><rect x="1" y="1" width="14" height="10.500" rx="1.500" /><path d="M1 8.500h14M5.500 14.500h5M8 11.500v3" /></Ico></Tool></ToolGroup>
                  </Actions>
                </NavBar>
                <Board>
                  <Column>
                    <Pair>
                      <Panel title="CPU load" h={220}><Gauge r={121} value={0.0455} label="4.55%" warn={0.85} crit={0.95} size={40.5} baseline={158} /></Panel>
                      <Panel title="RAM Used" h={220}><Gauge r={115} value={0.61} label="61%" warn={0.8} crit={0.9} size={52.5} baseline={159} /></Panel>
                    </Pair>
                    <Panel title="CPU" h={258}>
                      <Plot height={196} plot={{ left: 43, x0: 96.4, step: 113.85, bottom: 170.5, max: 100 }}
                        yTicks={[[0, "0%"], [25, "25%"], [50, "50%"], [75, "75%"], [100, "100%"]]} series={cpuSeries} />
                      <Legends items={[[YELLOW, "System"], ["#6d1f62", "Other"], [GREEN, "Idle"]]} />
                    </Panel>
                    <Panel title="Memory" h={258}>
                      <Plot height={196} plot={{ left: 59, x0: 111.5, step: 112.3, bottom: 170.5, max: 1431 }}
                        yTicks={[[0, "0 B"], [477, "477 MiB"], [954, "954 MiB"], [1431, "1.40 GiB"]]} series={memSeries} />
                      <Legends items={[["#e0f9d7", "RAM Total"], [YELLOW, "RAM Used"], ["#052b51", "RAM Cache + Buffer"], [GREEN, "RAM Free"], ["#bf1b00", "SWAP Used"]]} />
                    </Panel>
                  </Column>
                  <Column>
                    <Panel title="Disk Space Used" h={372}>
                      <Plot height={310} plot={{ left: 43, x0: 96.5, step: 113.85, bottom: 284.5, max: 100 }}
                        yTicks={[[0, "0%"], [20, "20%"], [40, "40%"], [60, "60%"], [80, "80%"], [100, "100%"]]} series={spaceSeries} />
                      <Legends items={[[GREEN, "/"], [YELLOW, "/run"], ["#6ed0e0", "/run/lock"], ["#ef843c", "/run/snapd/ns"], ["#e24d42", "/run/user/1000"]]} />
                    </Panel>
                    <Panel title="Disk R/W Data" h={372}>
                      <Plot height={257} yLabel="bytes read (-) / write (+)" plot={{ left: 76, x0: 127.5, step: 110.55, bottom: 231.5, min: -3, max: 2 }}
                        yTicks={[[2, "2 MB/s"], [1, "1 MB/s"], [0, "0 B/s"], [-1, "-1 MB/s"], [-2, "-2 MB/s"], [-3, "-3 MB/s"]]}
                        series={rwSeries} />
                      <StatTable>
                        <StatRow $head><i />{["min", "max", "avg", "current"].map((t) => <StatCell key={t}>{t}</StatCell>)}</StatRow>
                        <StatRow><StatName><Swatch $c={GREEN} $mr={10} />sda - Read bytes</StatName>{["6.14 kB/s", "2.51 MB/s", "610 kB/s", "21.6 kB/s"].map((t) => <StatCell key={t}>{t}</StatCell>)}</StatRow>
                        <StatRow $shade><StatName><Swatch $c="#6ed0e0" $mr={10} />sda - Written bytes</StatName>{["4.26 kB/s", "1.08 MB/s", "210 kB/s", "19.6 kB/s"].map((t) => <StatCell key={t}>{t}</StatCell>)}</StatRow>
                      </StatTable>
                    </Panel>
                  </Column>
                </Board>
              </Main>
            </Grafana>
          </Body>
        </Window>
      </Browser>
      <Taskbar>
        <TaskSlot $w={48}>{task.start}</TaskSlot>
        <TaskSlot $w={50}>{task.search}</TaskSlot>
        {taskItems.map(([name, open, active]) => <TaskSlot key={name} $open={open} $active={active}>{task[name]}</TaskSlot>)}
        <Tray>
          <TraySlot><Ico s={12} stroke="#fff" strokeWidth="1.500"><path d="m1 11 7-7 7 7" /></Ico></TraySlot>
          <TraySlot><Aimp s={15} /></TraySlot>
          <TraySlot><Ico stroke="#fff"><path d="M.5.5h15v15H.5zM6.500 4.500v7L10 8z" /></Ico></TraySlot>
          <TraySlot><Ico><circle cx="8" cy="8" r="8" fill="#cfe02b" /><path d="M8 3v10M3 8h10" stroke="#2f9e2a" strokeWidth="3.500" /></Ico></TraySlot>
          <TraySlot><Ico stroke="#fff"><path d="M1 3.500 15 1v13.500L1 13z" /><path d="M5.500 8.500a3 3 0 0 1 5-2M11 8a3 3 0 0 1-5 2" /><circle cx="12.500" cy="12.500" r="3.500" fill="#ff9a17" stroke="none" /></Ico></TraySlot>
          <TraySlot><Ico stroke="#fff"><path d="M5 3.500h10.500v8H4.500V7M.5 2.500h4v4h-4zM10 11.500v3M6 14.500h8" /></Ico></TraySlot>
          <TraySlot><Ico stroke="#fff"><path d="M.5 5.500H3l4-4v13l-4-4H.5z" /><path d="M9 5.500c1 1.500 1 3.500 0 5M11 4c2 2.500 2 5.500 0 8" /><path d="M13.500 2.500c2.500 3.500 2.500 7.500 0 11" stroke="#777" /></Ico></TraySlot>
          <TrayText $w={35} $ls={-0.4}>ENG</TrayText>
          <TrayText $w={64}>15:48<br />29.04.2022</TrayText>
          <ShowDesktop />
        </Tray>
      </Taskbar>
    </Screen>
  );
}
